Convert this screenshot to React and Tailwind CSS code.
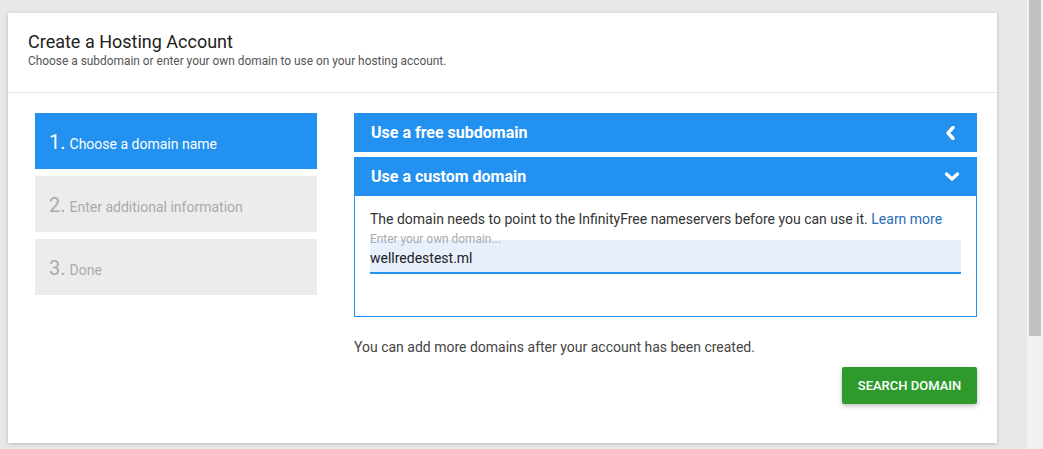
import React, { useState } from 'react';

const steps = [
  { n: '1.', label: 'Choose a domain name', active: true },
  { n: '2.', label: 'Enter additional information' },
  { n: '3.', label: 'Done' },
];

function Chevron({ dir }) {
  // chunky font-awesome style chevrons
  const pts = dir === 'left' ? '8,1.5 3,7 8,12.5' : '1.5,4 7,9 12.5,4';
  return (
    <svg width="14" height="14" viewBox="0 0 14 14" className="shrink-0">
      <polyline points={pts} fill="none" stroke="white" strokeWidth="3.4" strokeLinecap="round" strokeLinejoin="round" />
    </svg>
  );
}

export default function App() {
  const [domain, setDomain] = useState('wellredestest.ml');

  return (
    <div className="flex h-[449px] w-[1043px] overflow-hidden bg-[#e8e8e8] font-['Roboto',sans-serif]">
      <div className="flex-1 pl-[8px] pt-[13px]">
        <div className="h-[430px] w-[989px] bg-white shadow-[0_1px_4px_rgba(0,0,0,0.2)]">
          {/* header */}
          <div className="border-b border-[#e6e6e6] px-[20px] pt-[17px] pb-[24px]">
            <h1 className="text-[18px] leading-[24px] text-[#212121]">Create a Hosting Account</h1>
            <p className="text-[11.9px] leading-[14px] text-[#555]">
              Choose a subdomain or enter your own domain to use on your hosting account.
            </p>
          </div>

          <div className="flex gap-[37px] pl-[27px] pr-[20px] pt-[20px]">
            {/* steps */}
            <div className="flex w-[282px] flex-col gap-[7px]">
              {steps.map((s) => (
                <div
                  key={s.n}
                  className={
                    s.active
                      ? 'flex h-[56px] items-baseline pl-[14px] pt-[18px] bg-[#2291f0] text-white'
                      : 'flex h-[56px] items-baseline pl-[14px] pt-[18px] bg-[#ececec] text-[#aaa]'
                  }
                >
                  <span className="text-[20px] leading-[22px]">{s.n}</span>
                  <span className="ml-[4px] text-[14px]">{s.label}</span>
                </div>
              ))}
            </div>

            {/* domain options */}
            <div className="flex flex-1 flex-col">
              <div className="flex h-[39px] items-center justify-between bg-[#2291f0] pl-[17px] pr-[18px] text-white">
                <span className="text-[16px] font-bold">Use a free subdomain</span>
                <Chevron dir="left" />
              </div>
              <div className="mt-[5px] flex h-[39px] items-center justify-between bg-[#2291f0] pl-[17px] pr-[18px] text-white">
                <span className="text-[16px] font-bold">Use a custom domain</span>
                <Chevron dir="down" />
              </div>
              <div className="h-[121px] border border-t-0 border-[#2291f0] px-[15px] pt-[14px]">
                <p className="text-[14px] leading-[18px] text-[#333]">
                  The domain needs to point to the InfinityFree nameservers before you can use it.{' '}
                  <a className="text-[#2a6cb8]" href="#">Learn more</a>
                </p>
                <label className="relative z-10 mt-[5px] block text-[11.9px] leading-[13px] text-[#aaa]">Enter your own domain...</label>
                <input
                  value={domain}
                  onChange={(e) => setDomain(e.target.value)}
                  className="-mt-[6px] block h-[34px] w-full border-b-2 border-[#2291f0] bg-[#e8f0fe] pt-[3px] text-[14px] text-[#222] outline-none"
                />
              </div>

              <p className="mt-[21px] text-[14px] leading-[18px] text-[#444]">
                You can add more domains after your account has been created.
              </p>
              <div className="mt-[11px] flex justify-end">
                <button className="h-[37px] w-[135px] rounded-[2px] bg-[#2e9a2e] text-[13px] font-medium text-white shadow-[0_2px_5px_rgba(0,0,0,0.26)]">
                  SEARCH DOMAIN
                </button>
              </div>
            </div>
          </div>
        </div>
      </div>

      {/* scrollbar */}
      <div className="w-[16px] bg-[#f1f1f1] px-[2px]">
        <div className="h-[336px] bg-[#c1c1c1]" />
      </div>
    </div>
  );
}
